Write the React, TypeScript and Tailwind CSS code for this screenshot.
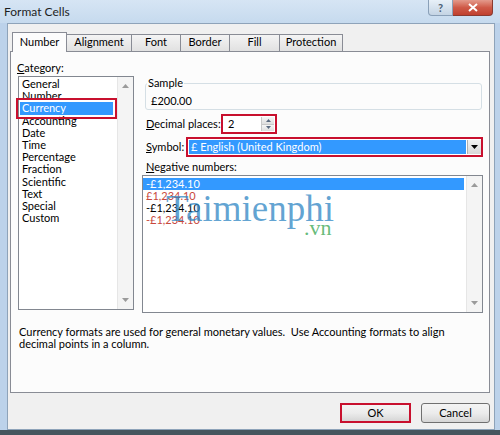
import React from "react";

const UI = "font-['Segoe_UI',Lato,sans-serif]";

const categories = [
  "General",
  "Number",
  "Currency",
  "Accounting",
  "Date",
  "Time",
  "Percentage",
  "Fraction",
  "Scientific",
  "Text",
  "Special",
  "Custom",
];

const tabs = [
  { label: "Alignment", w: "w-[66px]" },
  { label: "Font", w: "w-[50px]" },
  { label: "Border", w: "w-[50px]" },
  { label: "Fill", w: "w-[51px]" },
  { label: "Protection", w: "w-[64px]" },
];

const negatives = [
  { text: "-£1,234.10", cls: "bg-[#3399ff] text-white mr-[2px]" },
  { text: "£1,234.10", cls: "text-[#c8483c]" },
  { text: "-£1,234.10", cls: "text-black" },
  { text: "-£1,234.10", cls: "text-[#c8483c]" },
];

function Arrow({ dir, className }: { dir: "up" | "down"; className?: string }) {
  return (
    <svg width="7" height="4" viewBox="0 0 7 4" className={className}>
      <path d={dir === "up" ? "M0 4 L3.5 0 L7 4Z" : "M0 0 L3.5 4 L7 0Z"} fill="currentColor" />
    </svg>
  );
}

function Scrollbar() {
  return (
    <div className="w-[16px] flex flex-col items-center justify-between py-[7px] bg-[#f4f4f4] border-l border-[#e6e6e6] text-[#9a9a9a]">
      <Arrow dir="up" />
      <Arrow dir="down" />
    </div>
  );
}

export default function App() {
  return (
    <div className={`w-[500px] h-[435px] flex flex-col overflow-hidden bg-[#bcd2ea] text-[11px] text-black ${UI} relative`}>
      {/* Title bar */}
      <div className="h-[23px] flex items-start justify-between pl-[4px] pr-[7px] bg-gradient-to-b from-[#d6e5f4] to-[#c6daee]">
        <span className="pt-[5px] text-[12px] leading-[14px] text-[#1e1e1e]">Format Cells</span>
        <div className="flex">
          <div className="w-[25px] h-[16px] flex items-center justify-center rounded-bl-[4px] border border-t-0 border-[#8aa0b8] bg-gradient-to-b from-[#e8f0f8] to-[#c4d4e4] text-[11px] font-bold text-[#4a5e74] leading-none">
            ?
          </div>
          <div className="w-[40px] h-[16px] flex items-center justify-center rounded-br-[4px] border border-t-0 border-l-0 border-[#8a3a30] bg-gradient-to-b from-[#e39a8c] via-[#cf5a48] to-[#c0402e]">
            <svg width="10" height="9" viewBox="0 0 10 9">
              <path d="M1 1 L9 8 M9 1 L1 8" stroke="white" strokeWidth="2" />
            </svg>
          </div>
        </div>
      </div>

      {/* Window frame */}
      <div className="flex-1 flex pl-[7px] pr-[5px]">
        <div className="flex-1 flex flex-col bg-[#f0f0f0] border border-[#8ea3b9] pl-[2px] pr-[4px] pt-[8px]">
          {/* Tabs */}
          <div className="h-[20px] flex items-end pl-[2px]">
            <div className="relative z-10 w-[55px] h-[20px] flex items-center justify-center bg-[#fcfcfc] border border-b-0 border-[#898c95] pb-px">
              Number
            </div>
            {tabs.map((t) => (
              <div
                key={t.label}
                className={`${t.w} h-[18px] -ml-px flex items-center justify-center border border-[#898c95] bg-gradient-to-b from-[#f4f4f4] to-[#e1e1e1] pb-[2px]`}
              >
                {t.label}
              </div>
            ))}
          </div>

          {/* Panel */}
          <div className="-mt-px h-[342px] border border-[#898c95] bg-[#fcfcfc] pl-[7px] pt-[9px]">
            <div className="flex">
              {/* Category */}
              <div className="w-[116px]">
                <div className="h-[14px] leading-[14px] -ml-px">
                  <span className="underline">C</span>ategory:
                </div>
                <div className="mt-px h-[234px] flex border border-[#828790] bg-white">
                  <div className="flex-1 pt-px">
                    {categories.map((c) =>
                      c === "Currency" ? (
                        <div
                          key={c}
                          className="h-[12.2px] leading-[12px] ml-[1px] mr-[4px] pl-[2px] bg-[#3399ff] text-white outline-2 outline-[#c8102e] outline-offset-[2px]"
                        >
                          {c}
                        </div>
                      ) : (
                        <div key={c} className="h-[12.2px] leading-[12px] pl-[3px]">
                          {c}
                        </div>
                      )
                    )}
                  </div>
                  <Scrollbar />
                </div>
              </div>

              {/* Right column */}
              <div className="ml-[8px] w-[341px]">
                <fieldset className="mt-[15px] ml-[3px] w-[337px] h-[34px] border border-[#d5dfe5] rounded-[3px] px-[5px]">
                  <legend className="-ml-[4px] px-px leading-[14px]">Sample</legend>
                  <div className="pt-[5px] leading-[12px]">£200.00</div>
                </fieldset>

                <div className="mt-[4px] h-[20px] flex items-center pl-[4px]">
                  <span className="w-[75px]">
                    <span className="underline">D</span>ecimal places:
                  </span>
                  <div className="w-[56px] h-[20px] flex border-2 border-[#c8102e] bg-white">
                    <div className="flex-1 pl-[5px] leading-[16px]">2</div>
                    <div className="w-[13px] flex flex-col border-l border-[#c8c8c8] my-px mr-px">
                      <div className="flex-1 flex items-center justify-center bg-gradient-to-b from-[#f6f6f6] to-[#dedede] border-b border-[#c8c8c8] text-[#5a6a80]">
                        <svg width="5" height="3" viewBox="0 0 5 3">
                          <path d="M0 3 L2.5 0 L5 3Z" fill="currentColor" />
                        </svg>
                      </div>
                      <div className="flex-1 flex items-center justify-center bg-gradient-to-b from-[#f6f6f6] to-[#dedede] text-[#5a6a80]">
                        <svg width="5" height="3" viewBox="0 0 5 3">
                          <path d="M0 0 L2.5 3 L5 0Z" fill="currentColor" />
                        </svg>
                      </div>
                    </div>
                  </div>
                </div>

                <div className="mt-[3px] h-[20px] flex items-center pl-[4px]">
                  <span className="w-[40px]">
                    <span className="underline">S</span>ymbol:
                  </span>
                  <div className="flex-1 h-[20px] flex items-stretch border-2 border-[#c8102e] bg-white p-px pr-0">
                    <div className="flex-1 bg-[#3399ff] text-white pl-[2px] leading-[14px]">£ English (United Kingdom)</div>
                    <div className="w-[14px] ml-px flex items-center justify-center bg-gradient-to-b from-[#f2f2f2] to-[#d8d8d8] border-l border-[#b0b0b0]">
                      <svg width="7" height="4" viewBox="0 0 7 4">
                        <path d="M0 0 L3.5 4 L7 0Z" fill="black" />
                      </svg>
                    </div>
                  </div>
                </div>

                <div className="mt-[3px] h-[14px] leading-[14px] pl-[4px]">
                  <span className="underline">N</span>egative numbers:
                </div>
                <div className="mt-px h-[138px] flex border border-[#828790] bg-white">
                  <div className="flex-1 pt-[2px]">
                    {negatives.map((n, i) => (
                      <div key={i} className={`h-[12px] leading-[12px] pl-[3px] ${n.cls}`}>
                        {n.text}
                      </div>
                    ))}
                  </div>
                  <Scrollbar />
                </div>
              </div>
            </div>

            <p className="mt-[13px] pl-px leading-[12px]">
              Currency formats are used for general monetary values.&nbsp; Use Accounting formats to align
              <br />
              decimal points in a column.
            </p>
          </div>

          {/* Buttons */}
          <div className="mt-[10px] flex justify-end gap-[10px]">
            <button className="w-[71px] h-[20px] border-2 border-[#c8102e] bg-gradient-to-b from-[#f4f4f4] via-[#ececec] to-[#d6d6d6] leading-[14px]">
              OK
            </button>
            <button className="w-[69px] h-[20px] border border-[#707070] rounded-[3px] bg-gradient-to-b from-[#f4f4f4] via-[#ececec] to-[#d6d6d6] leading-[16px]">
              Cancel
            </button>
          </div>
        </div>
      </div>
      <div className="h-[5px] bg-[#46565e]" />

      {/* Watermark */}
      <span className="absolute left-[166px] top-[190px] font-['Liberation_Serif',serif] text-[37px] leading-none text-[#2f86c4]/75">
        Taimienphi
      </span>
      <span className="absolute left-[304px] top-[217px] font-['Liberation_Serif',serif] text-[22px] leading-none text-[#4caf62]/85">
        .vn
      </span>
    </div>
  );
}
